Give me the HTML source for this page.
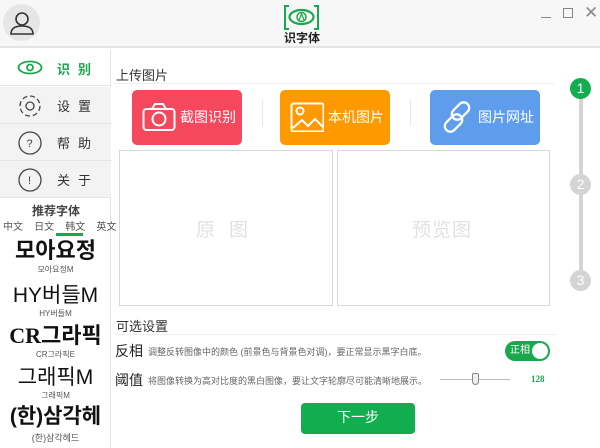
<!DOCTYPE html><html><head><meta charset="utf-8"><style>
*{margin:0;padding:0;box-sizing:border-box}
body{width:600px;height:448px;background:#fff;font-family:"Liberation Sans","Noto Sans CJK SC",sans-serif;position:relative;overflow:hidden;color:#333}
.a{position:absolute}
.hdr{left:0;top:0;width:600px;height:48px;background:#f7f7f7;border-bottom:2px solid #e4e4e4}
.side{left:0;top:50px;width:111px;height:398px;border-right:1px solid #e2e2e2}
.nav{left:0;width:111px;height:37px;background:#f3f3f3;border-bottom:1px solid #e4e4e4;font-size:13px;letter-spacing:8px}
.nav span{position:absolute;left:57px;top:9px}
.nav svg{position:absolute;left:17px;top:6px}
.btn{width:110px;height:55px;border-radius:5px;color:#fff;font-size:14px}
.btn svg{position:absolute;left:10px;top:12px}
.btn span{position:absolute;left:48px;top:17px}
.box{border:1px solid #d8d8d8;top:150px;height:156px}
.ko{left:0;width:111px;text-align:center;color:#111}
.step{width:21px;height:21px;border-radius:50%;color:#fff;font-size:14px;text-align:center;line-height:21px;left:570px;background:#d4d4d4}
</style></head><body>
<div class="a hdr"></div>
<div class="a" style="left:3px;top:4px;width:37px;height:37px;border-radius:50%;background:#e6e6e6"></div>
<svg class="a" style="left:9px;top:11px" width="26" height="25" viewBox="0 0 26 25"><circle cx="13" cy="8" r="6" fill="none" stroke="#333" stroke-width="1.6"/><path d="M2 23c0-6 5-8 11-8s11 2 11 8z" fill="none" stroke="#333" stroke-width="1.6"/></svg>
<svg class="a" style="left:283px;top:5px" width="37" height="25" viewBox="0 0 37 25"><path d="M6 1H2v23h4M31 1h4v23h-4" fill="none" stroke="#1aa84e" stroke-width="2"/><ellipse cx="18.5" cy="12" rx="12" ry="7" fill="none" stroke="#1aa84e" stroke-width="2.2"/><circle cx="18.5" cy="12" r="4.5" fill="none" stroke="#1aa84e" stroke-width="1.5"/><path d="M16 15l2.5-6 2.5 6" fill="none" stroke="#1aa84e" stroke-width="1.2"/></svg>
<div class="a" style="left:284px;top:29px;font-size:12px;font-weight:bold;color:#222">识字体</div>
<div class="a" style="left:541px;top:17px;width:10px;border-top:1px solid #888"></div>
<div class="a" style="left:563px;top:8px;width:10px;height:10px;border:1.5px solid #888"></div>
<div class="a" style="left:584px;top:3px;font-size:17px;color:#888">✕</div>
<div class="a side"></div>
<div class="a" style="left:0;top:50px;width:111px;height:36px;border-bottom:1px solid #e4e4e4"></div>
<svg class="a" style="left:17px;top:60px" width="26" height="15"><ellipse cx="13" cy="7.5" rx="11.5" ry="6" fill="none" stroke="#1aa84e" stroke-width="1.8"/><circle cx="13" cy="7.5" r="3" fill="none" stroke="#1aa84e" stroke-width="1.8"/></svg>
<div class="a" style="left:57px;top:59px;font-size:13px;letter-spacing:8px;color:#1aa84e;font-weight:bold">识别</div>
<div class="a nav" style="top:87px"><svg width="26" height="26"><circle cx="13" cy="13" r="4" fill="none" stroke="#444" stroke-width="1.3"/><circle cx="13" cy="13" r="10" fill="none" stroke="#444" stroke-width="1.3" stroke-dasharray="5 2.8"/></svg><span>设置</span></div>
<div class="a nav" style="top:124px"><svg width="26" height="26"><circle cx="13" cy="13" r="11" fill="none" stroke="#444" stroke-width="1.3"/><text x="9.5" y="17" font-size="11" fill="#444">?</text></svg><span>帮助</span></div>
<div class="a nav" style="top:161px"><svg width="26" height="26"><circle cx="13" cy="13" r="11" fill="none" stroke="#444" stroke-width="1.3"/><text x="11" y="17" font-size="11" fill="#444">!</text></svg><span>关于</span></div>
<div class="a" style="left:32px;top:202px;font-size:12px;font-weight:bold;color:#444">推荐字体</div>
<div class="a" style="left:3px;top:218px;font-size:10px;color:#555;word-spacing:0">中文&nbsp;&nbsp;&nbsp;&nbsp;日文&nbsp;&nbsp;&nbsp;&nbsp;韩文&nbsp;&nbsp;&nbsp;&nbsp;英文</div>
<div class="a" style="left:56px;top:233px;width:27px;height:3px;background:#1aa84e"></div>
<div class="a ko" style="top:238px;font-size:22px;font-weight:bold;line-height:26px">모아요정</div>
<div class="a ko" style="top:264px;font-size:8px;color:#555">모아요정M</div>
<div class="a ko" style="top:283px;font-size:21px;line-height:26px">HY버들M</div>
<div class="a ko" style="top:308px;font-size:8px;color:#555">HY버들M</div>
<div class="a ko" style="top:323px;font-size:22px;font-weight:bold;font-family:'Liberation Serif','Noto Sans CJK KR',serif;line-height:26px">CR그라픽</div>
<div class="a ko" style="top:349px;font-size:8px;color:#555">CR그라픽E</div>
<div class="a ko" style="top:365px;font-size:21px;line-height:26px">그래픽M</div>
<div class="a ko" style="top:390px;font-size:8px;color:#555">그래픽M</div>
<div class="a ko" style="top:404px;font-size:21px;font-weight:bold;line-height:26px">(한)삼각헤</div>
<div class="a ko" style="top:431px;font-size:9px;color:#555">(한)삼각헤드</div>
<div class="a" style="left:116px;top:65px;font-size:13px;color:#333">上传图片</div>
<div class="a" style="left:115px;top:83px;width:440px;border-top:1px solid #eee"></div>
<div class="a btn" style="left:132px;top:90px;background:#f5485c"><svg width="34" height="30"><rect x="1.5" y="7" width="31" height="21" rx="3" fill="none" stroke="#fff" stroke-width="2"/><path d="M10 7l3-5h8l3 5" fill="none" stroke="#fff" stroke-width="2"/><circle cx="17" cy="17" r="6.5" fill="none" stroke="#fff" stroke-width="2"/></svg><span style="left:48px">截图识别</span></div>
<div class="a" style="left:262px;top:100px;height:26px;border-left:1px solid #e6e6e6"></div>
<div class="a btn" style="left:280px;top:90px;background:#fe9a00"><svg width="34" height="30"><rect x="1.5" y="1.5" width="32" height="28" rx="2" fill="none" stroke="#fff" stroke-width="2"/><circle cx="10" cy="9" r="3.5" fill="none" stroke="#fff" stroke-width="2"/><path d="M3 26l9-8 6 6 7-7 8 8" fill="none" stroke="#fff" stroke-width="2"/></svg><span>本机图片</span></div>
<div class="a" style="left:410px;top:100px;height:26px;border-left:1px solid #e6e6e6"></div>
<div class="a btn" style="left:430px;top:90px;background:#5e9cec"><svg width="34" height="34" style="top:10px"><g fill="none" stroke="#fff" stroke-width="2.3"><rect x="15" y="1" width="11" height="20" rx="5.5" transform="rotate(45 20.5 11)"/><rect x="8" y="13" width="11" height="20" rx="5.5" transform="rotate(45 13.5 23)"/></g></svg><span>图片网址</span></div>
<div class="a box" style="left:119px;width:214px"></div>
<div class="a box" style="left:337px;width:213px"></div>
<div class="a" style="left:196px;top:215px;font-size:19px;color:#e2e2e2;letter-spacing:14px">原图</div>
<div class="a" style="left:412px;top:215px;font-size:19px;color:#e2e2e2;letter-spacing:1px">预览图</div>
<div class="a" style="left:116px;top:316px;font-size:13px">可选设置</div>
<div class="a" style="left:115px;top:334px;width:442px;border-top:1px solid #eee"></div>
<div class="a" style="left:115px;top:341px;font-size:14px;color:#222">反相</div>
<div class="a" style="left:148px;top:345px;font-size:9px;color:#666">调整反转图像中的颜色 (前景色与背景色对调)，要正常显示黑字白底。</div>
<div class="a" style="left:505px;top:341px;width:45px;height:20px;border-radius:10px;background:#1aa84e"><div class="a" style="left:5px;top:3px;color:#fff;font-size:10px;line-height:13px">正相</div><div class="a" style="right:2px;top:2px;width:16px;height:16px;border-radius:50%;background:#fff"></div></div>
<div class="a" style="left:115px;top:370px;font-size:14px;color:#222">阈值</div>
<div class="a" style="left:148px;top:374px;font-size:9px;color:#666">将图像转换为高对比度的黑白图像，要让文字轮廓尽可能清晰地展示。</div>
<div class="a" style="left:440px;top:379px;width:70px;border-top:1px solid #bbb"></div>
<div class="a" style="left:472px;top:373px;width:7px;height:12px;border:1px solid #888;border-radius:2px 2px 4px 4px;background:#eee"></div>
<div class="a" style="left:531px;top:374px;font-size:9px;font-weight:bold;color:#1aa84e;font-family:'Liberation Serif',serif">128</div>
<div class="a" style="left:301px;top:403px;width:114px;height:31px;border-radius:4px;background:#12ad4f;color:#fff;font-size:14px;text-align:center;line-height:29px">下一步</div>
<div class="a" style="left:579px;top:90px;width:4px;height:195px;background:#d4d4d4"></div>
<div class="a step" style="top:78px;background:#12ad4f">1</div>
<div class="a step" style="top:174px">2</div>
<div class="a step" style="top:270px">3</div>
</body></html>
